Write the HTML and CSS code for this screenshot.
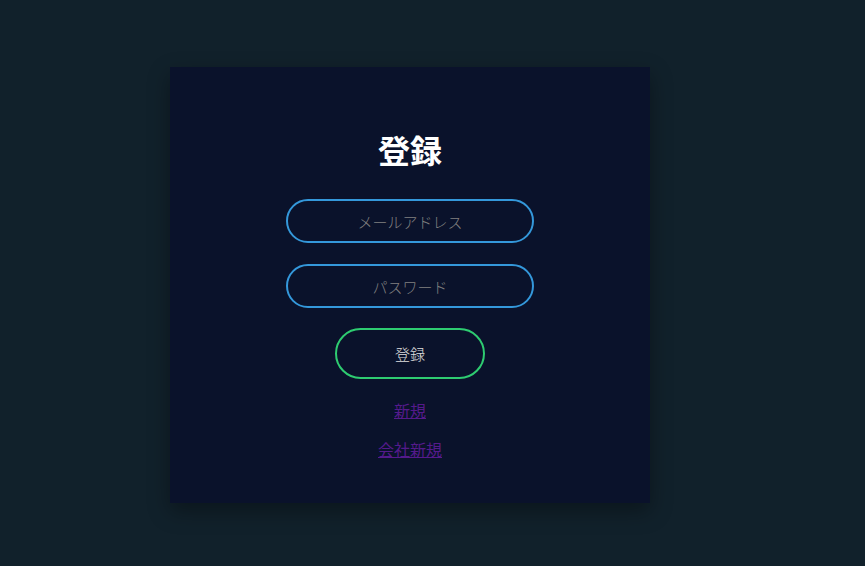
FILE: index.html
```html
<!DOCTYPE html>
<html lang="ja">
<head>
<meta charset="utf-8">
<link rel="stylesheet" href="styles.css">
</head>
<body>
<div class="page">
  <form class="card">
    <h1 class="title">登録</h1>
    <input class="field" type="text" placeholder="メールアドレス">
    <input class="field" type="password" placeholder="パスワード">
    <button class="submit" type="button">登録</button>
    <a class="link" href="#">新規</a>
    <a class="link" href="#">会社新規</a>
  </form>
</div>
</body>
</html>
```

FILE: styles.css
```css
html, body {
  margin: 0;
  padding: 0;
  height: 100%;
  background: #11212b;
  font-family: "Noto Sans CJK JP", "Noto Sans", sans-serif;
}
.page {
  display: flex;
  justify-content: flex-start;
  padding: 67px 0 0 170px;
}
.card {
  width: 480px;
  height: 436px;
  box-sizing: border-box;
  background: #0a122b;
  box-shadow: 0 8px 20px rgba(0, 0, 0, 0.35);
  display: flex;
  flex-direction: column;
  align-items: center;
  padding-top: 60px;
}
.title {
  margin: 0 0 28px;
  color: #ffffff;
  font-size: 32px;
  font-weight: 700;
  line-height: 44px;
}
.field {
  width: 248px;
  height: 44px;
  box-sizing: border-box;
  border: 2px solid #3498db;
  border-radius: 24px;
  background: transparent;
  color: #ddd;
  text-align: center;
  font-family: inherit;
  font-size: 15px;
  font-weight: 300;
  margin: 0 0 21px;
  outline: none;
  padding: 0 10px;
}
.field::placeholder {
  color: #808080;
}
.submit {
  width: 150px;
  height: 51px;
  box-sizing: border-box;
  border: 2px solid #2ecc71;
  border-radius: 26px;
  background: transparent;
  color: #e0e0e0;
  font-family: inherit;
  font-size: 15px;
  font-weight: 300;
  margin: -1px 0 20px;
  cursor: pointer;
}
.link {
  color: #551a8b;
  font-size: 16px;
  line-height: 22px;
  text-decoration: underline;
  margin-bottom: 17px;
}
```
